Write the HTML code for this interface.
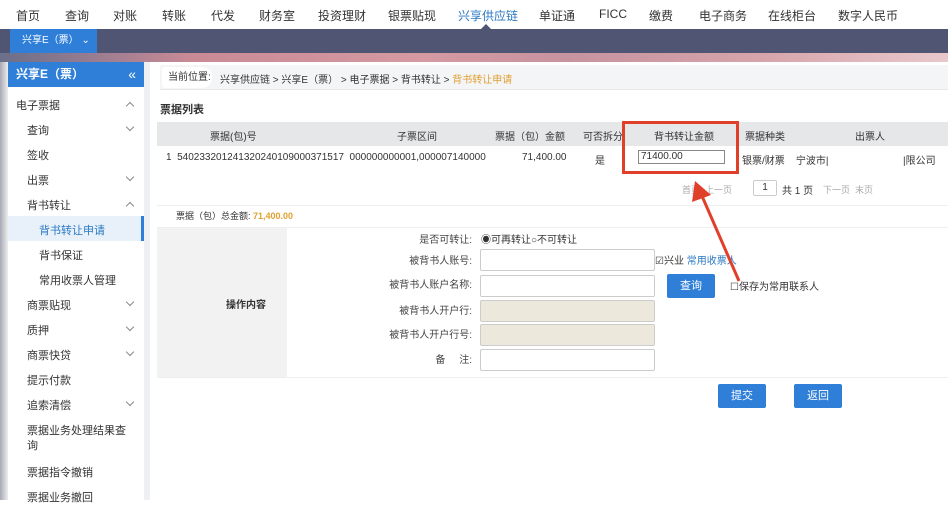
<!DOCTYPE html>
<html><head><meta charset="utf-8"><style>
*{margin:0;padding:0;box-sizing:border-box}
body{width:948px;height:500px;overflow:hidden;background:#fff;font-family:"Liberation Sans","Noto Sans CJK SC",sans-serif;font-size:11px;color:#333;position:relative}
.a{position:absolute;white-space:nowrap}
.nav span{position:absolute;top:7px;font-size:12px;color:#333}
.menu div{position:absolute;left:27px;font-size:11px;color:#333}
.chev{position:absolute;left:127px;width:6px;height:6px;border-right:1px solid #888;border-bottom:1px solid #888;transform:rotate(45deg)}
.up{transform:rotate(-135deg)}
.inp{position:absolute;left:480px;width:175px;height:22px;border:1px solid #ccc;background:#fff;border-radius:2px}
.lbl{position:absolute;right:476px;font-size:10px;color:#444}
.btn{position:absolute;background:#2f7fd8;color:#fff;font-size:11px;text-align:center;border-radius:2px}
</style></head><body>
<div class="nav">
<span style="left:16px">首页</span><span style="left:65px">查询</span><span style="left:113px">对账</span><span style="left:162px">转账</span><span style="left:211px">代发</span><span style="left:259px">财务室</span><span style="left:318px">投资理财</span><span style="left:388px">银票贴现</span><span style="left:458px;color:#2a78c2">兴享供应链</span><span style="left:539px">单证通</span><span style="left:599px">FICC</span><span style="left:649px">缴费</span><span style="left:699px">电子商务</span><span style="left:768px">在线柜台</span><span style="left:838px">数字人民币</span>
</div>
<div class="a" style="left:0;top:29px;width:948px;height:24px;background:#4f5573"></div>
<div class="a" style="left:480px;top:24px;width:0;height:0;border-left:6px solid transparent;border-right:6px solid transparent;border-bottom:6px solid #4f5573"></div>
<div class="a" style="left:10px;top:29px;width:87px;height:24px;background:#2f7fd8;color:#fff;font-size:10px;line-height:24px;padding-left:12px">兴享E（票） &#8964;</div>
<div class="a" style="left:0;top:53px;width:948px;height:9px;background:linear-gradient(90deg,#6a6f8a,#c98a96 20%,#d59aa2 45%,#c7939f 60%,#d6a4ab 80%,#e8c8cc)"></div>
<div class="a" style="left:0;top:62px;width:8px;height:438px;background:linear-gradient(90deg,#a7a9b8,#eee)"></div>
<div class="a" style="left:8px;top:62px;width:136px;height:438px;background:#fff"></div>
<div class="a" style="left:8px;top:62px;width:136px;height:25px;background:#2f7fd8;color:#fff;font-weight:bold;font-size:12px;line-height:25px;padding-left:8px">兴享E（票）<span style="position:absolute;right:8px;font-weight:normal;font-size:14px">«</span></div>
<div class="a" style="left:144px;top:62px;width:6px;height:438px;background:#eef0f3"></div>
<div class="a" style="left:8px;top:216px;width:136px;height:25px;background:#e8f1fa"></div>
<div class="a" style="left:141px;top:216px;width:3px;height:25px;background:#2f7fd8"></div>
<div class="menu">
<div style="left:16px;top:97px">电子票据</div><i class="chev up" style="top:103px"></i>
<div style="top:122px">查询</div><i class="chev" style="top:124px"></i>
<div style="top:147px">签收</div>
<div style="top:172px">出票</div><i class="chev" style="top:174px"></i>
<div style="top:197px">背书转让</div><i class="chev up" style="top:203px"></i>
<div style="left:39px;top:222px;color:#2a78c2">背书转让申请</div>
<div style="left:39px;top:247px">背书保证</div>
<div style="left:39px;top:272px">常用收票人管理</div>
<div style="top:297px">商票贴现</div><i class="chev" style="top:299px"></i>
<div style="top:322px">质押</div><i class="chev" style="top:324px"></i>
<div style="top:347px">商票快贷</div><i class="chev" style="top:349px"></i>
<div style="top:372px">提示付款</div>
<div style="top:397px">追索清偿</div><i class="chev" style="top:399px"></i>
<div style="top:422px">票据业务处理结果查</div>
<div style="top:437px">询</div>
<div style="top:464px">票据指令撤销</div>
<div style="top:489px">票据业务撤回</div>
</div>
<div class="a" style="left:160px;top:65px;width:788px;height:25px;background:#f4f5f7;border-bottom:1px solid #e8e8e8"></div>
<div class="a" style="left:162px;top:67px;width:50px;height:21px;background:#fff;border-radius:3px 10px 10px 3px;font-size:10px;line-height:21px;padding-left:6px">当前位置:</div>
<div class="a" style="left:220px;top:71px;font-size:10px">兴享供应链 &gt; 兴享E（票） &gt; 电子票据 &gt; 背书转让 &gt; <span style="color:#e0a030">背书转让申请</span></div>
<div class="a" style="left:160px;top:101px;font-size:11px;font-weight:bold;color:#333">票据列表</div>
<div class="a" style="left:157px;top:122px;width:791px;height:24px;background:#e6e7e9"></div>
<div class="a" style="top:128px;font-size:10px;left:210px">票据(包)号</div>
<div class="a" style="top:128px;font-size:10px;left:397px">子票区间</div>
<div class="a" style="top:128px;font-size:10px;left:495px">票据（包）金额</div>
<div class="a" style="top:128px;font-size:10px;left:583px">可否拆分</div>
<div class="a" style="top:128px;font-size:10px;left:654px">背书转让金额</div>
<div class="a" style="top:128px;font-size:10px;left:745px">票据种类</div>
<div class="a" style="top:128px;font-size:10px;left:855px">出票人</div>
<div class="a" style="top:152px;font-size:10px;left:166px">1&nbsp; 540233201241320240109000371517&nbsp; 000000000001,000007140000</div>
<div class="a" style="top:152px;font-size:10px;left:522px">71,400.00</div>
<div class="a" style="top:152px;font-size:10px;left:595px">是</div>
<div class="a" style="top:150px;left:638px;width:87px;height:14px;border:1px solid #888;font-size:10px;line-height:12px;padding-left:2px">71400.00</div>
<div class="a" style="top:152px;font-size:10px;left:742px">银票/财票&nbsp;&nbsp;&nbsp; 宁波市|</div>
<div class="a" style="top:152px;font-size:10px;left:903px">|限公司</div>
<div class="a" style="left:622px;top:121px;width:117px;height:53px;border:3px solid #e0402a"></div>
<div class="a" style="top:183px;font-size:9px;left:682px;color:#aaa">首页&nbsp; 上一页</div>
<div class="a" style="top:180px;left:753px;width:24px;height:16px;border:1px solid #ccc;border-radius:2px;font-size:10px;text-align:center;line-height:14px">1</div>
<div class="a" style="top:182px;font-size:10px;left:782px">共 1 页</div>
<div class="a" style="top:183px;font-size:9px;left:823px;color:#aaa">下一页&nbsp; 末页</div>
<div class="a" style="left:157px;top:205px;width:791px;height:1px;background:#eee"></div>
<div class="a" style="top:209px;font-size:9px;left:176px">票据（包）总金额: <b style="color:#e0a030">71,400.00</b></div>
<div class="a" style="left:157px;top:227px;width:791px;height:151px;background:#fff;border-top:1px solid #eee;border-bottom:1px solid #eee"></div>
<div class="a" style="left:157px;top:228px;width:130px;height:149px;background:#f2f2f2"></div>
<div class="a" style="left:226px;top:296px;font-size:10px;font-weight:bold">操作内容</div>
<div class="lbl" style="top:231px">是否可转让:</div>
<div class="a" style="left:481px;top:231px;font-size:10px">◉可再转让○不可转让</div>
<div class="lbl" style="top:252px">被背书人账号:</div><div class="inp" style="top:249px"></div>
<div class="a" style="left:655px;top:252px;font-size:10px">☑兴业 <span style="color:#2a78c2">常用收票人</span></div>
<div class="lbl" style="top:276px">被背书人账户名称:</div><div class="inp" style="top:275px"></div>
<div class="btn" style="left:667px;top:274px;width:48px;height:24px;line-height:24px">查询</div>
<div class="a" style="left:730px;top:278px;font-size:10px">☐保存为常用联系人</div>
<div class="lbl" style="top:302px">被背书人开户行:</div><div class="inp" style="top:300px;background:#ece8dc"></div>
<div class="lbl" style="top:326px">被背书人开户行号:</div><div class="inp" style="top:324px;background:#ece8dc"></div>
<div class="lbl" style="top:351px">备&nbsp;&nbsp;&nbsp;&nbsp; 注:</div><div class="inp" style="top:349px"></div>
<div class="btn" style="left:718px;top:384px;width:48px;height:24px;line-height:24px">提交</div>
<div class="btn" style="left:794px;top:384px;width:48px;height:24px;line-height:24px">返回</div>
<svg class="a" style="left:0;top:0" width="948" height="500"><line x1="739" y1="281" x2="702" y2="196" stroke="#e0402a" stroke-width="3"/><polygon points="695,181 692,202 711,195" fill="#e0402a"/></svg>
</body></html>
